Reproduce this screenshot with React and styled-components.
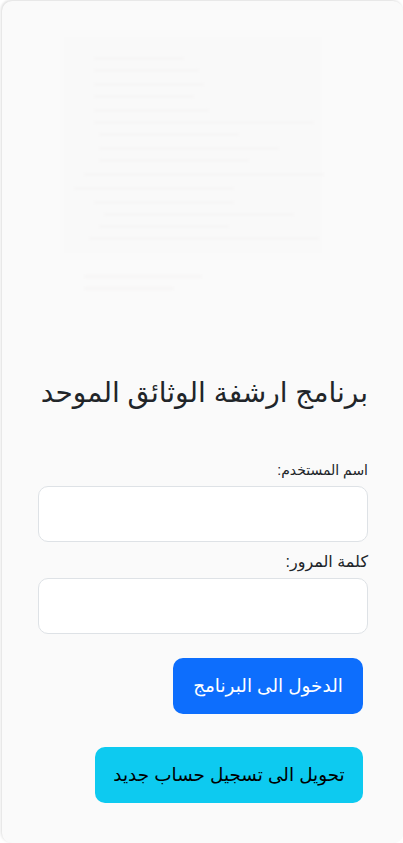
import React from 'react';
import styled, { createGlobalStyle } from 'styled-components';

const Global = createGlobalStyle`
  * { box-sizing: border-box; }
  html, body { margin: 0; padding: 0; background: #ffffff; height: 843px; overflow: hidden; }
  body { font-family: "Liberation Sans", Arial, "DejaVu Sans", sans-serif; }
`;

const Card = styled.div`
  width: 401px;
  height: 842px;
  margin: 1px 0 0 2px;
  background: #fafafa;
  border-radius: 10px;
  box-shadow: -1px -1px 3px rgba(0, 0, 0, 0.14);
  padding: 36px 35px 0 36px;
  overflow: hidden;
`;

const Scan = styled.svg`
  display: block;
  width: 270px;
  height: 270px;
  margin-left: 26px;
`;

const Title = styled.h2`
  margin: 68px 0 0;
  direction: rtl;
  font-size: 28px;
  line-height: 36px;
  font-weight: 400;
  color: #212529;
  white-space: nowrap;
`;

const Form = styled.form`
  direction: rtl;
  margin-top: 47px;
  display: flex;
  flex-direction: column;
`;

const Label = styled.label`
  font-size: ${p => p.$size}px;
  line-height: 24px;
  margin-bottom: 4px;
  color: #212529;
`;

const Field = styled.input`
  display: block;
  width: 330px;
  height: 56px;
  margin-bottom: 8px;
  background: #fff;
  border: 1px solid #dee2e6;
  border-radius: 10px;
`;

const Actions = styled.div`
  display: flex;
  flex-direction: column;
  align-items: flex-start;
  gap: 33px;
  margin: 16px 5px 0 0;
`;

const Button = styled.button`
  width: ${p => p.$width}px;
  height: 56px;
  padding: 0;
  border: 0;
  border-radius: 10px;
  font-family: inherit;
  font-size: 18.4px;
  white-space: nowrap;
  color: ${p => p.$fg};
  background: ${p => p.$bg};
`;

// faint blurred lines of the scanned page behind the form
const lines = [
  [30, 20, 90], [30, 32, 105], [30, 46, 110], [30, 58, 100], [30, 72, 115],
  [30, 84, 220], [35, 96, 140], [35, 110, 180], [35, 122, 150], [20, 136, 240],
  [10, 150, 160], [30, 164, 140], [40, 176, 190], [35, 188, 130], [25, 200, 230]
];

function App() {
  return (
    <>
      <Global />
      <Card>
        <Scan viewBox="0 0 270 270" aria-hidden="true">
          <defs>
            <filter id="soft">
              <feGaussianBlur stdDeviation="1.6" />
            </filter>
          </defs>
          <rect x="0" y="0" width="258" height="216" fill="#f9f9f9" />
          <g filter="url(#soft)" fill="#f6f5f5">
            {lines.map(([x, y, w]) => (
              <rect key={y} x={x} y={y} width={w} height="3" />
            ))}
            <rect x="20" y="238" width="118" height="3" />
            <rect x="20" y="250" width="90" height="3" />
          </g>
        </Scan>
        <Title>برنامج ارشفة الوثائق الموحد</Title>
        <Form>
          <Label htmlFor="user" $size={14}>اسم المستخدم:</Label>
          <Field id="user" type="text" />
          <Label htmlFor="pass" $size={16}>كلمة المرور:</Label>
          <Field id="pass" type="password" />
          <Actions>
            <Button type="button" $width={190} $bg="#0d6efd" $fg="#fff">الدخول الى البرنامج</Button>
            <Button type="button" $width={268} $bg="#0dcaf0" $fg="#000">تحويل الى تسجيل حساب جديد</Button>
          </Actions>
        </Form>
      </Card>
    </>
  );
}

export default App;
